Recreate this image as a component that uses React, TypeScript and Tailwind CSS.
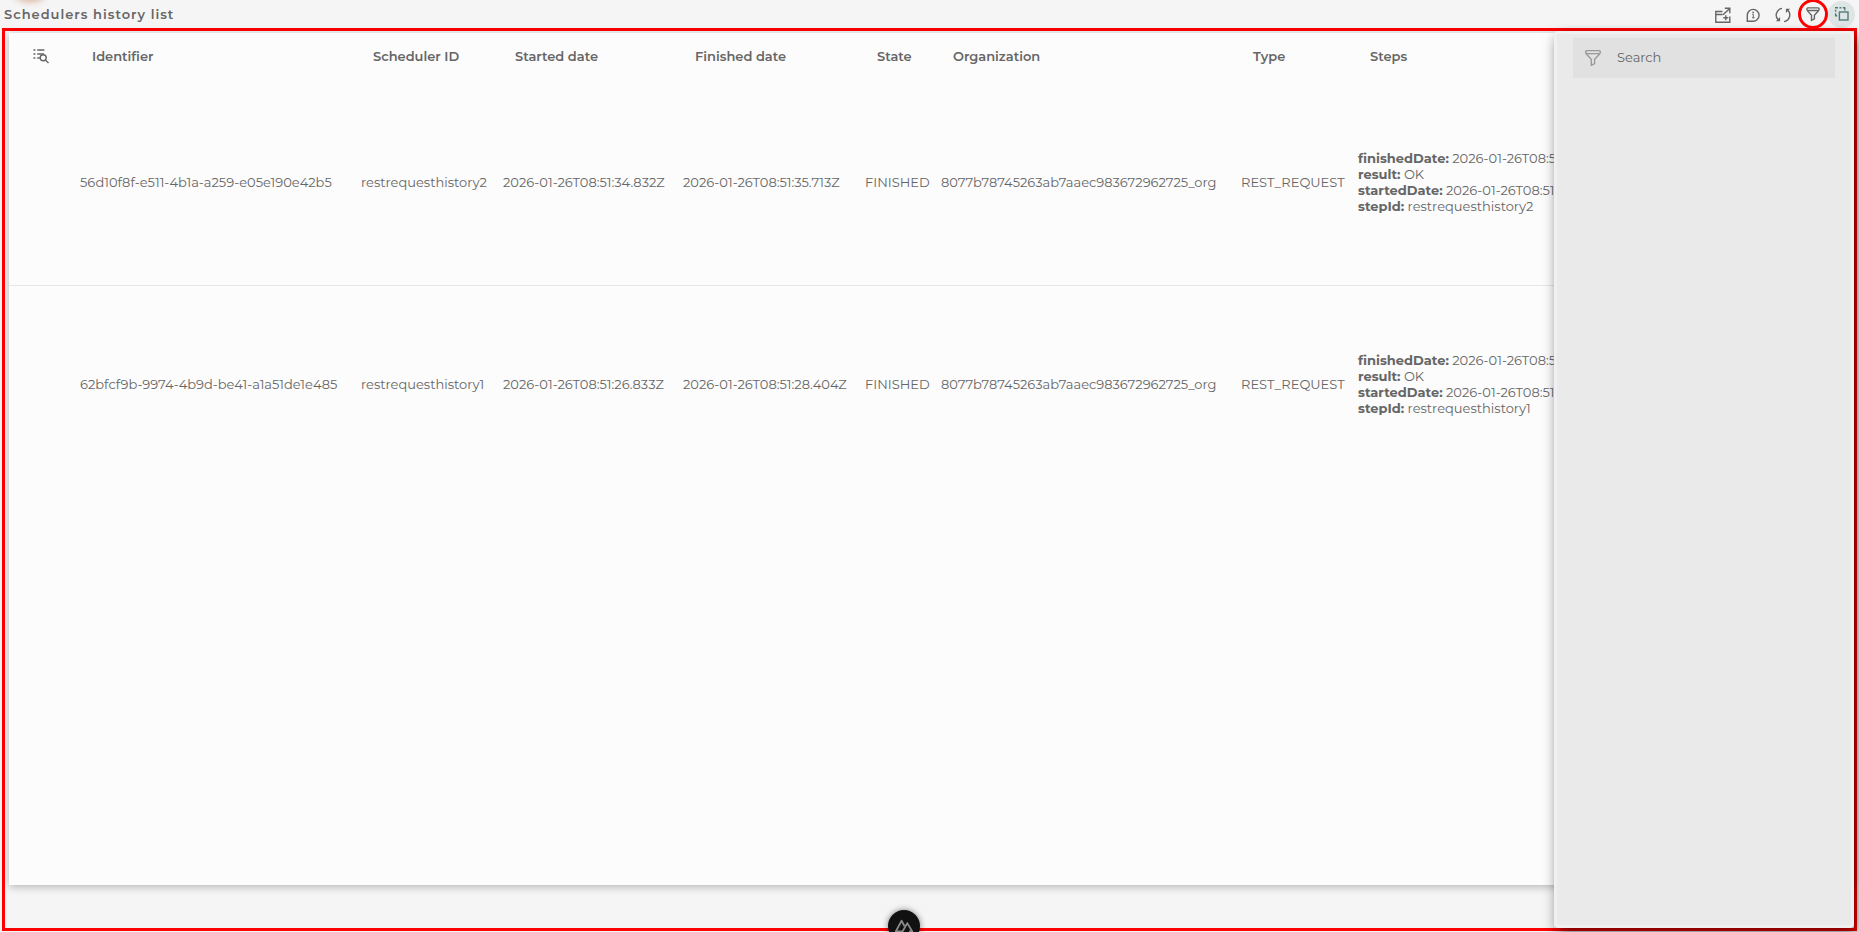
import type { ReactNode } from 'react';

type Step = {
  finishedDate: string;
  result: string;
  startedDate: string;
  stepId: string;
};

type HistoryRow = {
  id: string;
  schedulerId: string;
  started: string;
  finished: string;
  state: string;
  organization: string;
  type: string;
  step: Step;
};

const COLUMNS = [
  'Identifier',
  'Scheduler ID',
  'Started date',
  'Finished date',
  'State',
  'Organization',
  'Type',
  'Steps',
];

const ROWS: HistoryRow[] = [
  {
    id: '56d10f8f-e511-4b1a-a259-e05e190e42b5',
    schedulerId: 'restrequesthistory2',
    started: '2026-01-26T08:51:34.832Z',
    finished: '2026-01-26T08:51:35.713Z',
    state: 'FINISHED',
    organization: '8077b78745263ab7aaec983672962725_org',
    type: 'REST_REQUEST',
    step: {
      finishedDate: '2026-01-26T08:51:35.713Z',
      result: 'OK',
      startedDate: '2026-01-26T08:51:34.832Z',
      stepId: 'restrequesthistory2',
    },
  },
  {
    id: '62bfcf9b-9974-4b9d-be41-a1a51de1e485',
    schedulerId: 'restrequesthistory1',
    started: '2026-01-26T08:51:26.833Z',
    finished: '2026-01-26T08:51:28.404Z',
    state: 'FINISHED',
    organization: '8077b78745263ab7aaec983672962725_org',
    type: 'REST_REQUEST',
    step: {
      finishedDate: '2026-01-26T08:51:28.404Z',
      result: 'OK',
      startedDate: '2026-01-26T08:51:26.833Z',
      stepId: 'restrequesthistory1',
    },
  },
];

function Icon({ children }: { children: ReactNode }) {
  return (
    <svg
      viewBox="0 0 16 16"
      className="size-4 shrink-0"
      fill="none"
      stroke="currentColor"
      strokeWidth="1.4"
      aria-hidden="true"
    >
      {children}
    </svg>
  );
}

function OpenWindowIcon() {
  return (
    <Icon>
      <path d="M7.5 4.5H.8v10.7h14V9.5M.8 7.5h6.7M8 7.8l6.5-6M9.8 1.2h5v5M10.8 8.2v5M8.3 10.7h5" />
    </Icon>
  );
}

function InfoIcon() {
  return (
    <Icon>
      <path d="M2.3 14.2V8.2a5.9 5.9 0 1 1 5.9 6z" />
      <path d="M7.3 7.4h1v3.4M7 10.8h2.6" strokeWidth="1" />
      <circle cx="8.1" cy="5.4" r="0.9" fill="currentColor" stroke="none" />
    </Icon>
  );
}

function RefreshIcon() {
  return (
    <Icon>
      <path d="M7 1.4A6.8 6.8 0 0 0 3.3 13M9 14.6A6.8 6.8 0 0 0 12.7 3" />
      <path d="M.9 14.2h4.2V10zM15.1 1.8h-4.2V6z" fill="currentColor" stroke="none" />
    </Icon>
  );
}

function FilterIcon() {
  return (
    <Icon>
      <rect x="1.9" y="1.9" width="12.2" height="2.6" rx="1" />
      <path d="M2.3 4.6 6.5 9.2v5.2l2.9-1.6V9.2l4.3-4.6" />
    </Icon>
  );
}

function SelectionIcon() {
  return (
    <Icon>
      <path d="M1 1.7h3M5.5 1.7h1.8M8.8 1.7h2.6M1.6 3.8v2M1.6 7.2v2.6M1 9.8h2.2M10.8 2v2.4" />
      <rect x="5.4" y="6" width="8.6" height="8" />
    </Icon>
  );
}

function ListSearchIcon() {
  return (
    <Icon>
      <path d="M.4 2h2M4.2 2h7.2M.4 6h2M4.2 6h6.8M.4 10h2M4.2 10h2.6" strokeWidth="1.7" />
      <circle cx="10.2" cy="9.8" r="3" />
      <path d="m12.3 12 3.2 3" />
    </Icon>
  );
}

function ActionButton({ label, children }: { label: string; children: ReactNode }) {
  return (
    <button type="button" aria-label={label} className="flex h-7 w-[30px] items-center justify-center pt-0.5">
      {children}
    </button>
  );
}

function StepDetails({ step }: { step: Step }) {
  return (
    <ul>
      {Object.entries(step).map(([key, value]) => (
        <li key={key}>
          <b className="font-bold">{key}:</b> {value}
        </li>
      ))}
    </ul>
  );
}

function HistoryTable() {
  return (
    <table className="w-full table-fixed border-collapse text-left text-[13px] leading-4 whitespace-nowrap">
      <colgroup>
        <col className="w-[59px]" />
        <col className="w-[281px]" />
        <col className="w-[142px]" />
        <col className="w-[180px]" />
        <col className="w-[182px]" />
        <col className="w-[76px]" />
        <col className="w-[300px]" />
        <col className="w-[117px]" />
        <col />
      </colgroup>
      <thead>
        <tr className="h-[50px] *:pb-1">
          <th className="pl-6">
            <button type="button" aria-label="Search columns" className="flex">
              <ListSearchIcon />
            </button>
          </th>
          {COLUMNS.map((column) => (
            <th key={column} className="pl-6 font-semibold">
              {column}
            </th>
          ))}
        </tr>
      </thead>
      <tbody>
        {ROWS.map((row) => (
          <tr key={row.id} className="h-[202px] border-b border-[#e6e6e6] last:border-b-0 *:pb-1 *:pl-3">
            <td />
            <td>{row.id}</td>
            <td>{row.schedulerId}</td>
            <td>{row.started}</td>
            <td>{row.finished}</td>
            <td>{row.state}</td>
            <td>{row.organization}</td>
            <td>{row.type}</td>
            <td>
              <StepDetails step={row.step} />
            </td>
          </tr>
        ))}
      </tbody>
    </table>
  );
}

export default function App() {
  return (
    <div className="relative flex h-screen flex-col overflow-hidden bg-[#f5f5f5] font-['Montserrat','Inter',sans-serif] text-[#666]">
      <div className="absolute -top-8 left-3 h-8 w-9 rounded-full shadow-[0_0_6px_2px_#dcb9a4]" />

      <header className="flex h-7 shrink-0 items-center justify-between px-1">
        <h1 className="pt-0.5 text-[13px] font-semibold tracking-[1px]">Schedulers history list</h1>
        <div className="flex items-center">
          <ActionButton label="Open in new window">
            <OpenWindowIcon />
          </ActionButton>
          <ActionButton label="Information">
            <InfoIcon />
          </ActionButton>
          <ActionButton label="Refresh">
            <RefreshIcon />
          </ActionButton>
          <button
            type="button"
            aria-label="Filter"
            className="z-10 flex size-[30px] items-center justify-center rounded-full border-3 border-[#f00]"
          >
            <FilterIcon />
          </button>
          <button
            type="button"
            aria-label="Selection"
            className="flex size-[27px] items-center justify-center rounded-full bg-[#dfe5e5] text-[#4f7c78]"
          >
            <SelectionIcon />
          </button>
        </div>
      </header>

      <main className="relative mx-[2px] mb-px flex min-h-0 flex-1 border-3 border-[#f00]">
        <section className="mb-[43px] ml-1 mt-[2px] min-w-0 flex-1 overflow-hidden bg-[#fcfcfc] shadow-[0_2px_8px_rgba(0,0,0,0.25)]">
          <HistoryTable />
        </section>

        {/* filter drawer, floats over the table */}
        <aside className="absolute inset-y-0 right-0 w-[300px] rounded-sm border-3 border-[#f0f0f0] bg-[#eaeaea] px-4 py-1 shadow-[3px_6px_14px_rgba(0,0,0,0.55)]">
          <label className="flex h-10 items-center gap-4 bg-[#e1e1e1] px-3">
            <svg
              viewBox="1 1 14 14"
              className="size-4 shrink-0 text-[#999]"
              fill="none"
              stroke="currentColor"
              strokeWidth="1.2"
              aria-hidden="true"
            >
              <rect x="1.6" y="1.6" width="12.8" height="2.6" rx="1" />
              <path d="M2 4.3 6.5 9.2v5.2l2.9-1.6V9.2L14 4.3" />
            </svg>
            <input
              type="text"
              aria-label="Search"
              placeholder="Search"
              className="min-w-0 flex-1 text-[13px] outline-none placeholder:text-[#666]"
            />
          </label>
        </aside>
      </main>

      <button
        type="button"
        aria-label="Toggle devtools"
        className="absolute -bottom-[10px] left-[888px] flex size-8 items-center justify-center rounded-full bg-[#111] text-[#8a8a8a] shadow-[0_0_6px_rgba(0,0,0,0.5)]"
      >
        <svg viewBox="0 0 20 14" className="h-[14px] w-5" fill="none" stroke="currentColor" strokeWidth="1.8" strokeLinejoin="round" aria-hidden="true">
          <path d="M8.5 12.5H1.8L7.6 1.8l2.8 5.2M8.5 12.5l4.8-8.4 5 8.4h-3.2" />
        </svg>
      </button>
    </div>
  );
}
